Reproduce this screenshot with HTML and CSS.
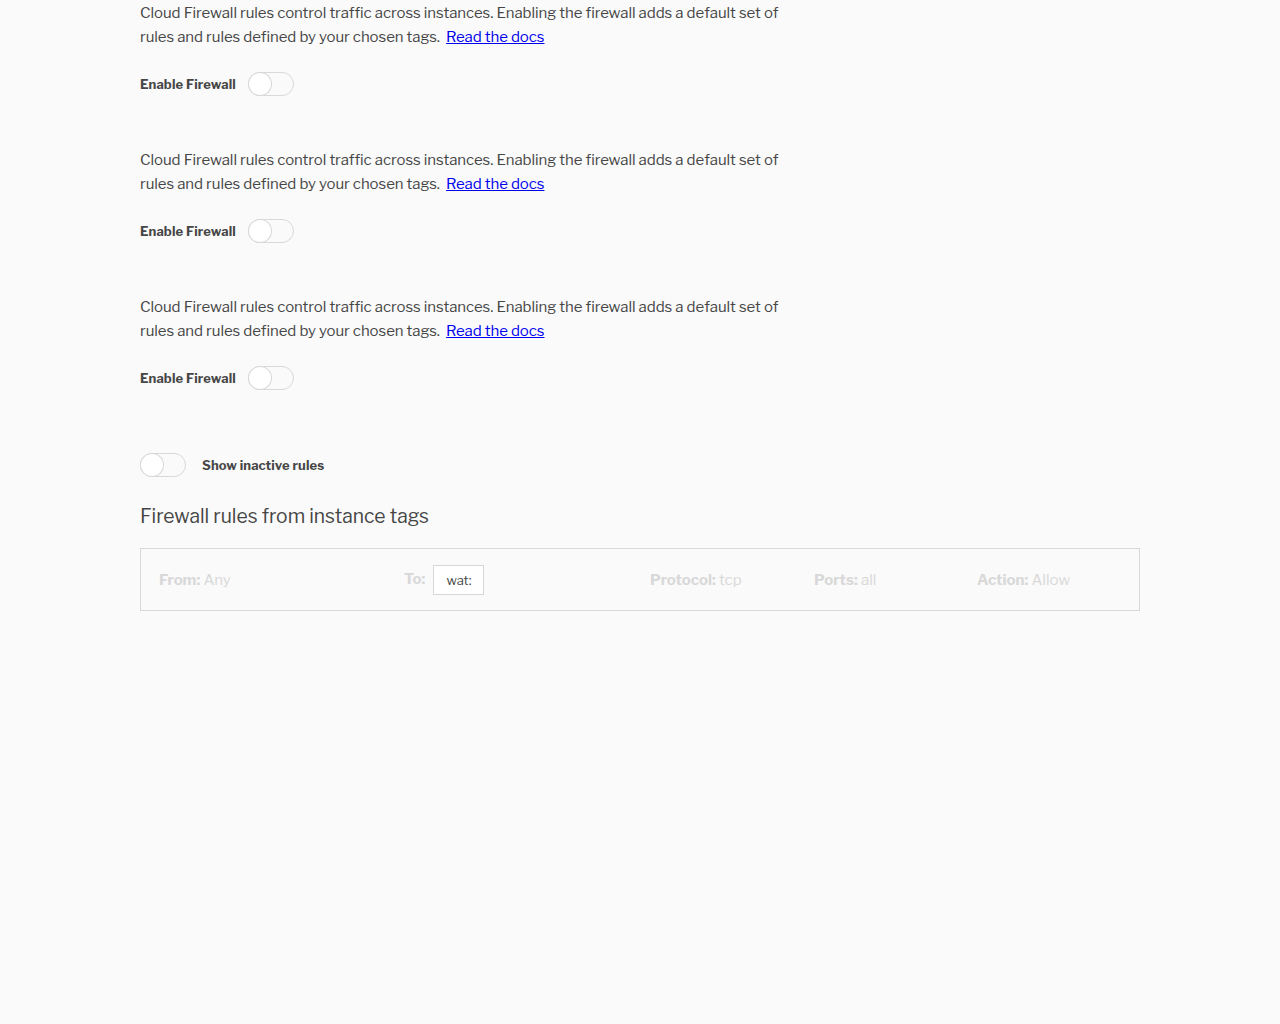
FILE: index.html
```html
<!DOCTYPE html>
<html>
<head>
<meta charset="utf-8">
<link rel="stylesheet" href="styles.css">
</head>
<body>
<main class="page">
  <section class="fw-block">
    <p class="desc">Cloud Firewall rules control traffic across instances. Enabling the firewall adds a default set of rules and rules defined by your chosen tags. <a href="#">Read the docs</a></p>
    <div class="toggle-row">
      <span class="label">Enable Firewall</span>
      <span class="toggle"><span class="knob"></span></span>
    </div>
  </section>
  <section class="fw-block">
    <p class="desc">Cloud Firewall rules control traffic across instances. Enabling the firewall adds a default set of rules and rules defined by your chosen tags. <a href="#">Read the docs</a></p>
    <div class="toggle-row">
      <span class="label">Enable Firewall</span>
      <span class="toggle"><span class="knob"></span></span>
    </div>
  </section>
  <section class="fw-block">
    <p class="desc">Cloud Firewall rules control traffic across instances. Enabling the firewall adds a default set of rules and rules defined by your chosen tags. <a href="#">Read the docs</a></p>
    <div class="toggle-row">
      <span class="label">Enable Firewall</span>
      <span class="toggle"><span class="knob"></span></span>
    </div>
  </section>
  <div class="inactive-row">
    <span class="toggle"><span class="knob"></span></span>
    <span class="label">Show inactive rules</span>
  </div>
  <h2 class="heading">Firewall rules from instance tags</h2>
  <div class="rules">
    <div class="cell"><b>From:</b> Any</div>
    <div class="cell"><b>To:</b> <span class="tag">wat:</span></div>
    <div class="cell"><b>Protocol:</b> tcp</div>
    <div class="cell"><b>Ports:</b> all</div>
    <div class="cell"><b>Action:</b> Allow</div>
  </div>
</main>
</body>
</html>
```
FILE: styles.css
```css
html, body {
  margin: 0;
  padding: 0;
  background: #fafafa;
}
body {
  font-family: "Libre Franklin", "Inter", "Roboto", sans-serif;
  color: #464646;
}
.page {
  width: 1000px;
  margin-left: 140px;
}
.fw-block {
  height: 147px;
}
.desc {
  margin: 0;
  padding-top: 1px;
  width: 650px;
  font-size: 15px;
  line-height: 24px;
  letter-spacing: -0.07px;
}
.desc a {
  color: #0000ee;
  margin-left: 3px;
}
.toggle-row {
  display: flex;
  align-items: center;
  gap: 12px;
  margin-top: 23px;
  height: 24px;
}
.label {
  font-size: 13px;
  font-weight: 700;
  color: #464646;
  letter-spacing: 0.1px;
}
.toggle {
  width: 44px;
  height: 22px;
  border: 1px solid #d8d8d8;
  border-radius: 12px;
  background: #fafafa;
  display: flex;
  align-items: center;
}
.knob {
  width: 22px;
  height: 22px;
  border-radius: 50%;
  background: #fff;
  box-shadow: 0 0 0 1px #d8d8d8;
}
.inactive-row {
  display: flex;
  align-items: center;
  gap: 16px;
  height: 24px;
  margin-top: 12px;
}
.heading {
  margin: 25px 0 0;
  font-size: 19.3px;
  font-weight: 400;
  line-height: 28px;
  color: #464646;
}
.rules {
  margin-top: 18px;
  height: 60px;
  padding-top: 1px;
  box-sizing: content-box;
  border: 1px solid #d8d8d8;
  padding-left: 18px;
  padding-right: 18px;
  display: grid;
  grid-template-columns: 245px 246px 164px 163px 1fr;
  align-items: center;
  font-size: 15px;
  color: #d8d8d8;
}
.rules b {
  font-weight: 700;
}
.tag {
  display: inline-block;
  box-sizing: border-box;
  height: 30px;
  line-height: 28px;
  padding: 0 12px;
  border: 1px solid #d8d8d8;
  background: #fff;
  color: #464646;
  font-size: 13px;
  margin-left: 5px;
  vertical-align: middle;
}
```
